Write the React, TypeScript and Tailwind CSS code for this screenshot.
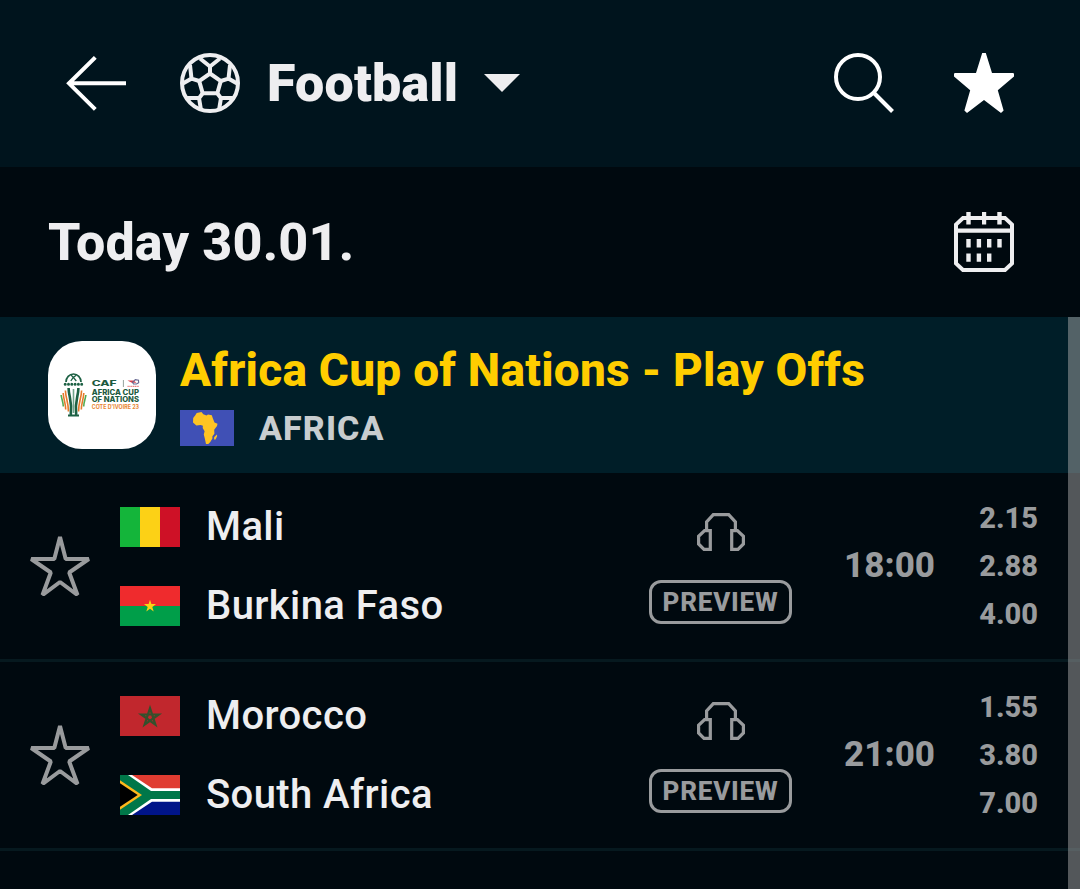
import type { ReactNode } from "react";

type Team = { name: string; flag: ReactNode };
type Match = { home: Team; away: Team; time: string; odds: string[] };

function ArrowLeft() {
  return (
    <svg width="60" height="55" viewBox="0 0 60 55" fill="none" stroke="#fff" strokeWidth="4">
      <path d="M29.3 1.4 3 27.3l26.3 26.1M3 27.3h57" />
    </svg>
  );
}

function Ball() {
  return (
    <svg width="60" height="60" viewBox="0 0 60 60" fill="none" stroke="#eeeef0" strokeWidth="4">
      <circle cx="30" cy="30" r="28" />
      <path d="M30 20.5 40.8 28 37.3 40.3H22.7L19.2 28Z" />
      <path d="M30 20.5V13.5M20 5.5 30 13.5 40 5.5" />
      <path d="M40.8 28 48.5 25.6M50 12 48.5 25.6 58 31" />
      <path d="M19.2 28 11.5 25.6M10 12 11.5 25.6 2 31" />
      <path d="M37.3 40.3 41 45.3M54 45H41L39 57" />
      <path d="M22.7 40.3 19 45.3M6 45H19L21 57" />
    </svg>
  );
}

function SearchIcon() {
  return (
    <svg width="60" height="60" viewBox="0 0 60 60" fill="none" stroke="#fff" strokeWidth="4">
      <circle cx="24" cy="24" r="22" />
      <path d="m39.5 39.5 19 19" />
    </svg>
  );
}

function StarFilled() {
  return (
    <svg width="60" height="60" viewBox="0 0 60 60" fill="#fff">
      <path d="M28.2 0h3.6L38 20h21.2l.8.8v2.8L43.8 37.2l5.8 20.4-2.6 2.4L30 47 13 60l-2.6-2.4 5.8-20.4L0 23.6v-2.8l.8-.8H22Z" />
    </svg>
  );
}

function StarOutline() {
  return (
    <svg width="60" height="60" viewBox="0 0 60 60" fill="none" stroke="#999b9d" strokeWidth="4" strokeLinejoin="bevel">
      <path d="M30 1 35.7 23H58.8L39.2 36.5 47.5 59 30 46 12.5 59 20.8 36.5 1.2 23H24.3Z" />
    </svg>
  );
}

function CalendarIcon() {
  return (
    <svg width="60" height="60" viewBox="0 0 60 60" fill="#eeeef0">
      <path d="M9 6H51L58 12.5V51.5L51 58H9L2 51.5V12.5Z" fill="none" stroke="#eeeef0" strokeWidth="4" />
      <path d="M2 16.5h56v4.3H2ZM12.3 0h4.4v12.6h-4.4ZM28 0h4.2v12.6H28ZM43.3 0h4.4v12.6h-4.4Z" />
      <path d="M12.3 27h4.4v8.4h-4.4ZM22.7 27h4.4v8.4h-4.4ZM33 27h4.4v8.4H33ZM43.3 27h4.4v8.4h-4.4Z" />
      <path d="M12.3 41.4h4.4v8.4h-4.4ZM22.7 41.4h4.4v8.4h-4.4ZM33 41.4h4.4v8.4H33Z" />
    </svg>
  );
}

function Headphones() {
  return (
    <svg width="48" height="38" viewBox="0 0 48 38" fill="none" stroke="#999b9d" strokeWidth="3.2">
      <path d="M9.6 17V8.9L16.3 1.6H31.7L38.4 8.9V17" />
      <path d="M13.3 17.6H7.6L1.6 23.3V31L7 36.4h6.3Z" />
      <path d="M34.7 17.6h5.7l6 5.7V31L41 36.4h-6.3Z" />
    </svg>
  );
}

function MaliFlag() {
  return (
    <div className="flex h-10 w-[60px]">
      <div className="flex-1 bg-[#14b53a]" />
      <div className="flex-1 bg-[#fcd116]" />
      <div className="flex-1 bg-[#ce1126]" />
    </div>
  );
}

function BurkinaFlag() {
  return (
    <svg width="60" height="40" viewBox="0 0 60 40">
      <rect width="60" height="20" fill="#ef2b2d" />
      <rect y="20" width="60" height="20" fill="#009e49" />
      <path d="m30 13.8 1.4 4.3H36l-3.7 2.8 1.4 4.6-3.7-2.8-3.7 2.8 1.4-4.6-3.7-2.8h4.6Z" fill="#fcd116" />
    </svg>
  );
}

function MoroccoFlag() {
  return (
    <svg width="60" height="40" viewBox="0 0 60 40">
      <rect width="60" height="40" fill="#c1272d" />
      <path d="M30 12.2 35.4 28.7 21.3 18.5H38.7L24.6 28.7Z" fill="none" stroke="#33502c" strokeWidth="2.2" />
    </svg>
  );
}

function SouthAfricaFlag() {
  return (
    <svg width="60" height="40" viewBox="0 0 60 40">
      <rect width="60" height="20" fill="#e03c31" />
      <rect y="20" width="60" height="20" fill="#001489" />
      <path d="M0 0H12L32 13.3H60V26.7H32L12 40H0Z" fill="#fff" />
      <path d="M0 0H8L31 16H60V24H31L8 40H0Z" fill="#007749" />
      <path d="M0 5.2 22 20 0 34.8Z" fill="#ffb81c" />
      <path d="M0 8.3 17.7 20 0 31.7Z" fill="#000" />
    </svg>
  );
}

function AfricaFlag() {
  return (
    <svg width="54" height="36" viewBox="0 0 54 36">
      <rect width="54" height="36" fill="#4050b5" />
      <path
        d="M16.7 3 21.5 2l1.8 2.2 3.2 1.2 1.5-.9 3.8.7 1 3 1.7 4.3 3 1.2-.5 2.3-2.8 3.8.2 4-2 2.4v2.2L30.3 32l-2 1.9H26L24.7 28l-.9-3.5.8-3.2-1.9-3.2.2-2.4-2.3-.8-4.2.7L13 12.4l.2-4.5 2.1-2.6Z"
        fill="#ffc423"
      />
      <path d="m36.8 24.5.4 1.6-1.7 3.4-1.4.1v-2.3Z" fill="#ffc423" />
    </svg>
  );
}

function CupLogo() {
  return (
    <svg width="108" height="108" viewBox="0 0 108 108" fontFamily="Inter, sans-serif" fontWeight="800">
      <g fill="none" stroke="#1d6144">
        <path d="M18 41a7.5 8 0 0 1 15 0" strokeWidth="1.7" />
        <path d="M17.2 43.2h17" strokeWidth="3" strokeDasharray="0 3.3" strokeLinecap="round" />
        <path d="m23 34 2.3 2.4 3-2.1M22.8 40l2.5-3.6 3 3.6" strokeWidth="1.3" />
        <path d="M20.6 47c0 9 4 13 2.2 27M30.4 47c0 9-4 13-2.2 27" strokeWidth="2.6" />
        <path d="M25.5 48v24" strokeWidth="1.6" stroke="#72a38b" />
        <path d="M20 74.6h11" strokeWidth="2" />
      </g>
      <g fill="none" strokeWidth="1.6">
        <path d="M17.4 49.5c.3 8 3.2 12 3 21M33.6 49.5c-.3 8-3.2 12-3 21" stroke="#e67a2b" />
        <path d="M15.2 52c.4 7 2.4 10 2.5 16.5M35.8 52c-.4 7-2.4 10-2.5 16.5" stroke="#e67a2b" />
        <path d="M13.1 54c.6 4.5 2 6.5 2.2 11.5M37.9 54c-.6 4.5-2 6.5-2.2 11.5" stroke="#53ac52" />
      </g>
      <g fill="#1d5a40">
        <text x="43.7" y="45" fontSize="6.9" textLength="25" lengthAdjust="spacingAndGlyphs">CAF</text>
        <text x="43.7" y="53.6" fontSize="7.2" textLength="47.3" lengthAdjust="spacingAndGlyphs">AFRICA CUP</text>
        <text x="43.7" y="61.4" fontSize="7.2" textLength="47.3" lengthAdjust="spacingAndGlyphs">OF NATIONS</text>
      </g>
      <text x="43.7" y="68.4" fontSize="5.7" fontWeight="700" fill="#e98432" textLength="47.3" lengthAdjust="spacingAndGlyphs">
        CÔTE D'IVOIRE 23
      </text>
      <path d="M75.4 39v7" stroke="#687b73" strokeWidth=".7" />
      <path d="M79.5 39.4h6l3 2.3h-4.7Z" fill="#d8404b" />
      <path d="m84.5 41.3 2.8-2.6 3.2.5.2 2.4-2.2 1.4h-3Z" fill="none" stroke="#63658f" strokeWidth="1.1" />
      <path d="M79.5 45.3h11.5" stroke="#e98080" strokeWidth="1.2" strokeDasharray="1.3 .5" />
    </svg>
  );
}

const matches: Match[] = [
  {
    home: { name: "Mali", flag: <MaliFlag /> },
    away: { name: "Burkina Faso", flag: <BurkinaFlag /> },
    time: "18:00",
    odds: ["2.15", "2.88", "4.00"],
  },
  {
    home: { name: "Morocco", flag: <MoroccoFlag /> },
    away: { name: "South Africa", flag: <SouthAfricaFlag /> },
    time: "21:00",
    odds: ["1.55", "3.80", "7.00"],
  },
];

function TeamLine({ team }: { team: Team }) {
  return (
    <div className="flex h-10 items-center">
      {team.flag}
      <span className="mt-px ml-[26px] whitespace-nowrap text-[40px] leading-10 font-medium tracking-[0.4px] text-[#eeeef0]">{team.name}</span>
    </div>
  );
}

function MatchRow({ match }: { match: Match }) {
  return (
    <div className="flex h-[189px] border-b-3 border-[#06191f] pl-[30px] text-[#999b9d]">
      <div className="mt-[63px] w-[90px] shrink-0">
        <StarOutline />
      </div>
      <div className="flex flex-1 flex-col gap-[39px] pt-[33.5px]">
        <TeamLine team={match.home} />
        <TeamLine team={match.away} />
      </div>
      <div className="flex w-[143px] flex-col items-center pt-10">
        <Headphones />
        <div className="mt-[29px] flex h-11 w-full items-center justify-center rounded-xl border-3 border-[#999b9d] text-[26px] font-extrabold tracking-[0.8px]">
          PREVIEW
        </div>
      </div>
      <div className="w-[143px] pt-[72px] text-right text-[35px] leading-[42px] font-extrabold">{match.time}</div>
      <div className="mr-[42px] w-[103px] pt-[21px] text-right text-[29px] leading-12 font-extrabold">
        {match.odds.map((odd) => (
          <div key={odd}>{odd}</div>
        ))}
      </div>
    </div>
  );
}

export default function App() {
  return (
    <div className="relative h-[889px] w-[1080px] overflow-hidden bg-[#00090f] font-[Roboto,sans-serif]">
      <header className="flex h-[167px] items-center bg-[#00141d] px-[66px] pb-px">
        <ArrowLeft />
        <div className="ml-[54px] flex items-center">
          <Ball />
          <h1 className="mt-0.5 ml-[27px] w-[193px] text-[52px] leading-none font-black tracking-[0.2px] text-[#eeeef0]">Football</h1>
          <svg className="ml-6" width="36" height="18" viewBox="0 0 36 18" fill="#eeeef0">
            <path d="M0 0h36L18 18Z" />
          </svg>
        </div>
        <div className="ml-auto flex gap-[60px]">
          <SearchIcon />
          <StarFilled />
        </div>
      </header>

      <div className="flex h-[150px] items-center justify-between pr-[66px] pl-12">
        <h2 className="mt-px text-[52px] leading-none font-extrabold tracking-[0.2px] text-[#eeeef0]">Today 30.01.</h2>
        <CalendarIcon />
      </div>

      <section className="flex h-[156px] items-center bg-[#001e28] pl-12">
        <div className="size-[108px] overflow-hidden rounded-[34px] bg-white">
          <CupLogo />
        </div>
        <div className="ml-6 pb-1">
          <h3 className="text-[46px] leading-[54px] font-extrabold tracking-[0.24px] whitespace-nowrap text-[#ffcd00]">Africa Cup of Nations - Play Offs</h3>
          <div className="mt-[15px] flex h-8 items-center">
            <AfricaFlag />
            <span className="ml-[25px] text-[34px] leading-8 font-extrabold tracking-[1.1px] text-[#c8cdcf]">AFRICA</span>
          </div>
        </div>
      </section>

      {matches.map((match) => (
        <MatchRow key={match.home.name} match={match} />
      ))}

      <div className="absolute top-[317px] right-0 bottom-0 w-3 bg-[#a6a6a6]/50" />
    </div>
  );
}
